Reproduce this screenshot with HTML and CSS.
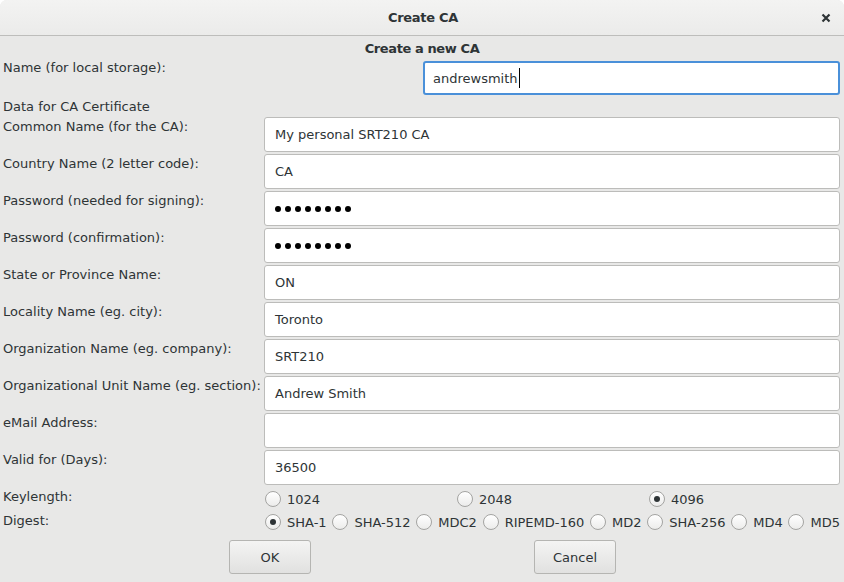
FILE: index.html
```html
<!DOCTYPE html>
<html>
<head>
<meta charset="utf-8">
<link rel="stylesheet" href="styles.css">
</head>
<body>
<div class="window">
  <header class="titlebar">
    <span class="title">Create CA</span>
    <span class="close"><svg width="10" height="10" viewBox="0 0 10 10"><path d="M1.5 1.5 L8.5 8.5 M8.5 1.5 L1.5 8.5" stroke="#2e3436" stroke-width="2.2" stroke-linecap="butt"/></svg></span>
  </header>
  <main class="content">
    <div class="heading">Create a new CA</div>
    <div class="name-row">
      <div class="label">Name (for local storage):</div>
      <div class="input focus"><span>andrewsmith</span><span class="caret"></span></div>
    </div>
    <div class="section">Data for CA Certificate</div>
    <div class="form">
      <div class="label">Common Name (for the CA):</div>
      <div class="input">My personal SRT210 CA</div>
      <div class="label">Country Name (2 letter code):</div>
      <div class="input">CA</div>
      <div class="label">Password (needed for signing):</div>
      <div class="input"><span class="dots"><i></i><i></i><i></i><i></i><i></i><i></i><i></i><i></i></span></div>
      <div class="label">Password (confirmation):</div>
      <div class="input"><span class="dots"><i></i><i></i><i></i><i></i><i></i><i></i><i></i><i></i></span></div>
      <div class="label">State or Province Name:</div>
      <div class="input">ON</div>
      <div class="label">Locality Name (eg. city):</div>
      <div class="input">Toronto</div>
      <div class="label">Organization Name (eg. company):</div>
      <div class="input">SRT210</div>
      <div class="label">Organizational Unit Name (eg. section):</div>
      <div class="input">Andrew Smith</div>
      <div class="label">eMail Address:</div>
      <div class="input"></div>
      <div class="label">Valid for (Days):</div>
      <div class="input">36500</div>
      <div class="label">Keylength:</div>
      <div class="keylen">
        <span class="radio"><span class="circle"></span>1024</span>
        <span class="radio"><span class="circle"></span>2048</span>
        <span class="radio"><span class="circle on"></span>4096</span>
      </div>
      <div class="label">Digest:</div>
      <div class="digest">
        <span class="radio"><span class="circle on"></span>SHA-1</span>
        <span class="radio"><span class="circle"></span>SHA-512</span>
        <span class="radio"><span class="circle"></span>MDC2</span>
        <span class="radio"><span class="circle"></span>RIPEMD-160</span>
        <span class="radio"><span class="circle"></span>MD2</span>
        <span class="radio"><span class="circle"></span>SHA-256</span>
        <span class="radio"><span class="circle"></span>MD4</span>
        <span class="radio"><span class="circle"></span>MD5</span>
      </div>
    </div>
    <div class="buttons">
      <button class="btn">OK</button>
      <button class="btn">Cancel</button>
    </div>
  </main>
</div>
</body>
</html>
```
FILE: styles.css
```css
html, body {
  margin: 0;
  padding: 0;
  background: #ffffff;
}
body {
  font-family: "DejaVu Sans", sans-serif;
  font-size: 13px;
  color: #2e3436;
}
.window {
  width: 844px;
  height: 582px;
  display: flex;
  flex-direction: column;
  overflow: hidden;
  border-radius: 7px 7px 0 0;
  background: #e8e8e7;
}
.titlebar {
  height: 35px;
  flex: none;
  border-bottom: 1px solid #bdbdbb;
  background: linear-gradient(#f3f3f2, #ebebea);
  display: flex;
  align-items: center;
  justify-content: center;
  position: relative;
}
.title {
  font-weight: bold;
  font-size: 13px;
  letter-spacing: -0.3px;
  color: #2e3436;
  padding-left: 2px;
}
.close {
  position: absolute;
  right: 13px;
  top: 13px;
  width: 10px;
  height: 10px;
  display: flex;
}
.content {
  flex: 1;
  display: flex;
  flex-direction: column;
}
.heading {
  text-align: center;
  font-weight: bold;
  letter-spacing: -0.4px;
  line-height: 16px;
  margin-top: 5px;
}
.label {
  line-height: 17px;
  padding-top: 1px;
  white-space: nowrap;
}
.name-row {
  display: grid;
  grid-template-columns: 420px 1fr;
  padding: 0 4px 0 3px;
  margin-top: 4px;
}
.name-row .label {
  padding-top: 0;
  line-height: 14px;
}
.input {
  box-sizing: border-box;
  height: 35px;
  background: #ffffff;
  border: 1px solid #bcbcba;
  border-radius: 3px;
  padding: 0 10px;
  display: flex;
  align-items: center;
  white-space: nowrap;
}
.input.focus {
  height: 34px;
  border: 2px solid #4a90d9;
  padding-left: 8px;
}
.caret {
  display: inline-block;
  width: 1px;
  height: 20px;
  background: #000;
  margin-left: 1px;
}
.section {
  line-height: 17px;
  padding-left: 3px;
  margin-top: 3px;
}
.form {
  display: grid;
  grid-template-columns: 261px 1fr;
  grid-template-rows: repeat(10, 35px) 22px 22px;
  row-gap: 2px;
  padding: 0 4px 0 3px;
  margin-top: 2px;
}
.dots {
  display: flex;
  gap: 4px;
}
.dots i {
  width: 6px;
  height: 6px;
  border-radius: 50%;
  background: #000;
}
.keylen {
  display: grid;
  grid-template-columns: 1fr 1fr 1fr;
  align-items: center;
  padding-top: 2px;
}
.keylen .radio {
  padding-left: 1px;
}
.digest {
  display: flex;
  align-items: center;
  justify-content: space-between;
  padding-left: 1px;
}
.radio {
  display: flex;
  align-items: center;
  white-space: nowrap;
  line-height: 17px;
}
.circle {
  width: 14px;
  height: 14px;
  border: 1px solid #a4a4a2;
  border-radius: 50%;
  background: linear-gradient(#ffffff, #ececeb);
  margin-right: 6px;
  display: flex;
  align-items: center;
  justify-content: center;
  flex: none;
}
.circle.on::after {
  content: "";
  width: 6px;
  height: 6px;
  border-radius: 50%;
  background: #2e3436;
}
.buttons {
  display: flex;
  justify-content: space-evenly;
  padding: 0 5px 0 6px;
  margin-top: 7px;
}
.btn {
  width: 82px;
  height: 34px;
  font-family: "DejaVu Sans", sans-serif;
  font-size: 13px;
  color: #2e3436;
  background: linear-gradient(#f4f4f3, #e1e1e0);
  border: 1px solid #b5b5b2;
  border-radius: 3px;
  padding: 0;
}
```
